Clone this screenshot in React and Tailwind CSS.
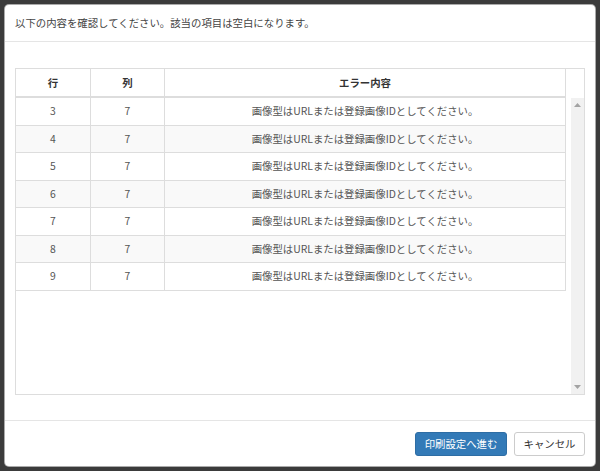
import React from 'react';

const rows = [3, 4, 5, 6, 7, 8, 9];

function Arrow({ up }) {
  return (
    <svg width="7" height="4" viewBox="0 0 7 4" className="mx-auto">
      <path d={up ? 'M0 4 L3.5 0 L7 4 Z' : 'M0 0 L3.5 4 L7 0 Z'} fill="#a3a3a3" />
    </svg>
  );
}

export default function App() {
  return (
    <div className="w-[600px] h-[471px] bg-[#3b3b3b] pt-[4px] px-[4px] font-['Noto_Sans_CJK_JP','Noto_Sans',sans-serif] text-[10.4px]">
      <div className="h-[463px] bg-white rounded-[5px] border border-[#2a2a2a]/40 flex flex-col overflow-hidden">
        <div className="h-[37px] shrink-0 border-b border-[#e5e5e5] px-[10px] flex items-center text-[#444]">
          以下の内容を確認してください。該当の項目は空白になります。
        </div>

        <div className="flex-1 px-[10px] pt-[26px] pb-[25px]">
          <div className="h-[327px] border border-[#dddddd] flex">
            <div className="w-[550px] flex flex-col">
              <div className="flex h-[29px] border-b-2 border-[#dddddd] font-bold text-[#333]">
                <div className="w-[75px] border-r border-[#dddddd] flex items-center justify-center">行</div>
                <div className="w-[74px] border-r border-[#dddddd] flex items-center justify-center">列</div>
                <div className="w-[401px] border-r border-[#dddddd] flex items-center justify-center">エラー内容</div>
              </div>
              {rows.map((r, i) => (
                <div
                  key={r}
                  className={
                    'flex h-[27.5px] border-b border-[#dddddd] text-[#555] ' +
                    (i % 2 === 1 ? 'bg-[#f9f9f9]' : 'bg-white')
                  }
                >
                  <div className="w-[75px] border-r border-[#dddddd] flex items-center justify-center">{r}</div>
                  <div className="w-[74px] border-r border-[#dddddd] flex items-center justify-center">7</div>
                  <div className="w-[401px] border-r border-[#dddddd] flex items-center justify-center">
                    画像型はURLまたは登録画像IDとしてください。
                  </div>
                </div>
              ))}
            </div>
            <div className="flex-1 flex flex-col">
              <div className="h-[29px] shrink-0" />
              <div className="flex-1 ml-auto w-[13px] bg-[#f1f1f1] flex flex-col justify-between py-[5px]">
                <Arrow up />
                <Arrow />
              </div>
            </div>
          </div>
        </div>

        <div className="h-[46px] shrink-0 border-t border-[#e5e5e5] flex items-center justify-end gap-[7px] px-[10px]">
          <button className="w-[92px] h-[24px] rounded-[3px] bg-[#337ab7] border border-[#2e6da4] text-white">
            印刷設定へ進む
          </button>
          <button className="w-[71px] h-[24px] rounded-[3px] bg-white border border-[#cccccc] text-[#333]">
            キャンセル
          </button>
        </div>
      </div>
    </div>
  );
}
